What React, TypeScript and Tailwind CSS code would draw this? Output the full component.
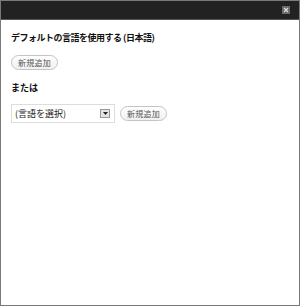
import React from "react";

const jp = { fontFamily: '"Noto Sans CJK JP", "Noto Sans", sans-serif' };

function PillButton() {
  return (
    <button className="h-[15px] w-[47px] px-0 rounded-full border border-[#c4c4c4] bg-gradient-to-b from-white to-[#f0f0f0] text-[8px] tracking-[0.3px] leading-none text-[#555] flex items-center justify-center">
      新規追加
    </button>
  );
}

export default function App() {
  return (
    <div
      className="w-[300px] h-[306px] border border-[#7a7a7a] bg-white flex flex-col"
      style={jp}
    >
      <div className="h-[19px] bg-[#222] border-b border-[#555] flex items-center justify-end pr-[9px] shrink-0">
        <div className="w-[8px] h-[8px] bg-[#6a6a6a] flex items-center justify-center">
          <svg width="6" height="6" viewBox="0 0 6 6">
            <path d="M1 1L5 5M5 1L1 5" stroke="#ddd" strokeWidth="1.2" />
          </svg>
        </div>
      </div>
      <div className="pl-[10px] pt-[13px] flex flex-col">
        <div className="text-[9px] font-bold text-[#111] leading-[10px] tracking-[-0.5px]">
          デフォルトの言語を使用する (日本語)
        </div>
        <div className="mt-[12px]">
          <PillButton />
        </div>
        <div className="mt-[13px] text-[9px] font-bold text-[#111] leading-[10px]">
          または
        </div>
        <div className="mt-[11px] flex items-center gap-[5px]">
          <div className="w-[104px] h-[19px] border border-[#ddd] bg-white flex items-center justify-between pl-[3px] pr-[4px]">
            <span className="text-[9px] text-[#222] leading-none">(言語を選択)</span>
            <div className="w-[10px] h-[9px] border border-[#999] bg-[#e4e4e4] flex items-center justify-center">
              <svg width="5" height="3" viewBox="0 0 5 3">
                <path d="M0 0H5L2.5 3Z" fill="#222" />
              </svg>
            </div>
          </div>
          <PillButton />
        </div>
      </div>
    </div>
  );
}
